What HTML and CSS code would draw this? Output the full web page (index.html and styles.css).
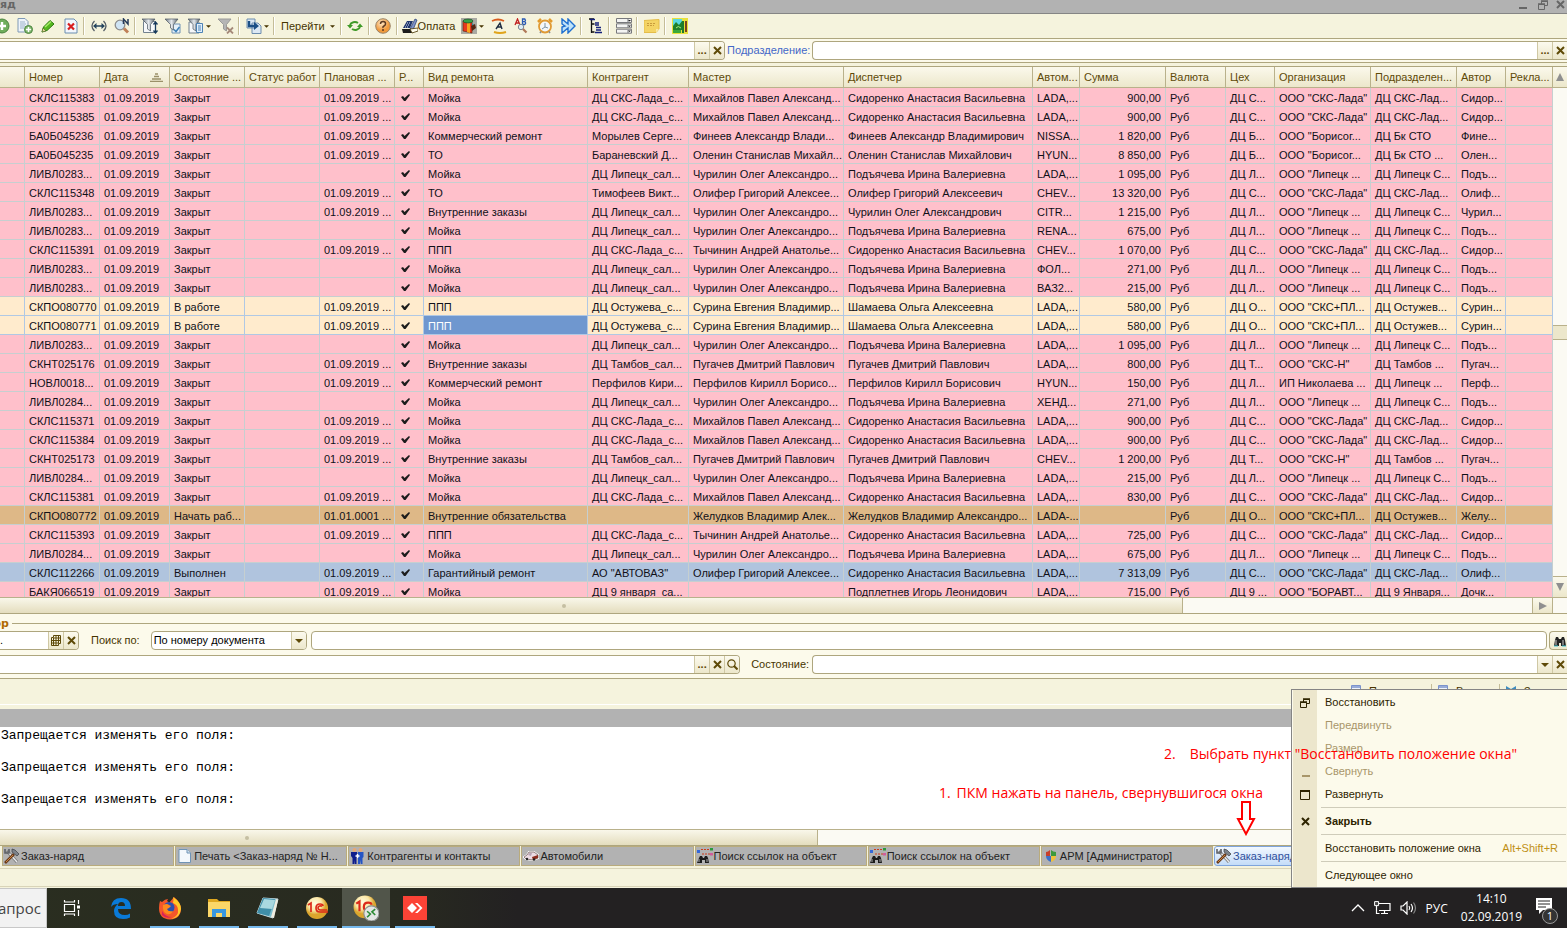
FILE: index.html
```
<!DOCTYPE html>
<html lang="ru">
  <head>
    <meta charset="UTF-8" />
    <meta name="viewport" content="width=device-width, initial-scale=1.0" />
    <title>Заказ-наряд</title>
    <link rel="stylesheet" href="styles.css">
  </head>
  <body>
    <svg class="sprite" aria-hidden="true">
      <defs>
        <linearGradient id="funnelFill" x1="0" x2="1"><stop offset="0" stop-color="#6b7680" /><stop offset=".5" stop-color="#e4e8ec" /><stop offset="1" stop-color="#59636c" /></linearGradient>
        <radialGradient id="gold" cx=".4" cy=".3"><stop offset="0" stop-color="#fffbe0" /><stop offset=".6" stop-color="#fbe8a8" /><stop offset="1" stop-color="#dba52c" /></radialGradient>
        <radialGradient id="orange" cx=".4" cy=".3"><stop offset="0" stop-color="#ffe9c6" /><stop offset="1" stop-color="#f09a3c" /></radialGradient>
      </defs>
      <symbol id="i-plus" viewBox="0 0 16 16"><circle cx="8" cy="8" r="7" fill="#6fae5c" stroke="#4c8440" /><path d="M8 4v8M4 8h8" stroke="#fff" stroke-width="2.4" /></symbol>
      <symbol id="i-docplus" viewBox="0 0 16 16"><path d="M1 .5h7l3 3V14H1z" fill="#eef4fa" stroke="#7f99b5" /><path d="M3 4h5M3 6h6M3 8h5M3 10h4" stroke="#9cb3cb" /><circle cx="11.500" cy="11.500" r="4" fill="#7fb76e" stroke="#4c8440" /><path d="M11.500 9v5M9 11.500h5" stroke="#fff" stroke-width="1.500" /></symbol>
      <symbol id="i-pencil" viewBox="0 0 16 16"><path d="M2 14l1.500-5L10 2.500l4 3.500L7 12.500z" fill="#56b820" stroke="#2c7a12" /><path d="M5 9l6-5.500" stroke="#a8ec6c" stroke-width="1.500" /><path d="M2 14l1-4 3 3z" fill="#e8d9a0" stroke="#4a6a20" stroke-width=".6" /></symbol>
      <symbol id="i-delete" viewBox="0 0 16 16"><path d="M2 1h9l3 3v11H2z" fill="#f2f7fc" stroke="#6b8db0" /><path d="M5 5.500l6 6M11 5.500l-6 6" stroke="#d81e1e" stroke-width="2.200" /></symbol>
      <symbol id="i-width" viewBox="0 0 16 16"><path d="M3.500 3Q-1.500 8 3.500 13M12.500 3q5 5 0 10" fill="none" stroke="#555e66" stroke-width="1.300" /><path d="M3 8h10" stroke="#24445e" stroke-width="1.500" /><path d="M2 8l3.500-3v6zM14 8l-3.500-3v6z" fill="#24445e" /></symbol>
      <symbol id="i-find" viewBox="0 0 16 16"><circle cx="6" cy="7" r="4.800" fill="#cfe4f4" stroke="#8c8c8c" stroke-width="1.300" /><path d="M10 10.500l4 4" stroke="#c08058" stroke-width="3" /><path d="M9.500 6V1l4.500 5V1" fill="none" stroke="#243a5a" stroke-width="1.500" /></symbol>
      <symbol id="i-filter-ord" viewBox="0 0 16 16"><path d="M1.500 3.500h12v11h-12z" fill="#f6f8fa" stroke="#72818e" /><path d="M0 1h13L8.500 6.500V13l-3-2V6.500z" fill="url(#funnelFill)" stroke="#4d5861" stroke-width=".7" /><path d="M13.500 4v11M11.500 12.500l2 2.500 2-2.500M11.500 6.500l2-2.500 2 2.500" fill="none" stroke="#173a5c" stroke-width="1.300" /></symbol>
      <symbol id="i-filter-sel" viewBox="0 0 16 16"><path d="M7 6h8v9H7z" fill="#e6f1fa" stroke="#6e91b3" /><path d="M0 1h13L8.500 6.500V12l-3-2V6.500z" fill="url(#funnelFill)" stroke="#4d5861" stroke-width=".7" /><path d="M9 11.500l2 2 3.500-4.500" fill="none" stroke="#3b7fb8" stroke-width="1.500" /></symbol>
      <symbol id="i-filter-list" viewBox="0 0 16 16"><path d="M1 4h10v11H1z" fill="#f6f8fa" stroke="#72818e" /><path d="M0 1h12L8 6.500V13l-3-2V6.500z" fill="url(#funnelFill)" stroke="#4d5861" stroke-width=".7" /><path d="M8.500 5.500h6v9h-6z" fill="#e2effb" stroke="#4c83b5" /><path d="M10 8h3M10 10h3M10 12h3" stroke="#4c83b5" /></symbol>
      <symbol id="i-filter-off" viewBox="0 0 16 16"><path d="M0 1h13L8.500 6.500V13l-3-2V6.500z" fill="#b5b5b5" stroke="#9a9a98" /><path d="M9 9.500l6 6M15 9.500l-6 6" stroke="#a58a7a" stroke-width="1.800" /></symbol>
      <symbol id="i-goto" viewBox="0 0 16 16"><path d="M1 1h8v9H1zM6 5h6l3 3v7.500H6z" fill="#dce8f4" stroke="#6c8cad" /><path d="M3 3v5h6" fill="none" stroke="#1c4f86" stroke-width="2.400" /><path d="M8 4L13 8 8 12z" fill="#1c4f86" /></symbol>
      <symbol id="i-refresh" viewBox="0 0 16 16"><path d="M3 7a5 4 0 0 1 8-2M13 9a5 4 0 0 1-8 2" fill="none" stroke="#3f9a28" stroke-width="2" /><path d="M0 7h6L3 10.500zM10 9h6l-3-3.500z" fill="#3f9a28" /></symbol>
      <symbol id="i-help" viewBox="0 0 16 16"><circle cx="8" cy="8" r="7.300" fill="url(#orange)" stroke="#9a8468" /><path d="M5.500 6q0-2.500 2.600-2.500T10.500 6q0 1.300-1.500 2T8 10" fill="none" stroke="#5c3a22" stroke-width="1.500" /><circle cx="8" cy="12" r="1" fill="#5c3a22" /></symbol>
      <symbol id="i-pay" viewBox="0 0 16 16"><path d="M1 10L5 3h6l-3 7z" fill="#20366e" /><path d="M5 5h4M4 7h4M3 9h4" stroke="#d8e0f4" stroke-dasharray="1 1" /><path d="M0 11h9l2 4H1z" fill="#1b1b1b" /><path d="M8 11l5-10 2 1-4 10z" fill="#7f93c8" stroke="#20366e" stroke-width=".7" /><path d="M8 11l8-1v3l-6 2z" fill="#fffef0" stroke="#463400" stroke-width=".8" /></symbol>
      <symbol id="i-barrel" viewBox="0 0 16 16"><path d="M0 0h16v16H0z" fill="#a9a9a2" /><path d="M2 3l9 1v11l-9-2z" fill="#e8381e" stroke="#5a1e08" stroke-width=".6" /><path d="M6 3.500h3V15l-3-1z" fill="#f7a21e" /><ellipse cx="7" cy="3" rx="5" ry="2" fill="#36a048" stroke="#1c3c1c" stroke-width=".6" /><path d="M11 5l2 2v3l-2 2z" fill="#2b94a8" /><path d="M10 8l4-2 1 4-4 3z" fill="#542814" /></symbol>
      <symbol id="i-aswap" viewBox="0 0 16 16"><path d="M1 3q6-3 12 0" fill="none" stroke="#d85a1c" stroke-width="1.800" /><path d="M3 14q6 2 12 0" fill="none" stroke="#e0a41c" stroke-width="2" /><path d="M5 11l4-6 2 6M6.500 9h4" fill="none" stroke="#1d2b40" stroke-width="1.400" /></symbol>
      <symbol id="i-abfind" viewBox="0 0 16 16"><path d="M1 7l2.500-6L6 7M2 5h3" fill="none" stroke="#c02020" stroke-width="1.300" /><path d="M8.500 1v5.500h2.300q1.700-1.400 0-2.800 1.300-1.400 0-2.700zM8.500 3.700h2.300" fill="none" stroke="#2a59b4" stroke-width="1.300" /><circle cx="7" cy="9" r="2.700" fill="#dcebf6" stroke="#7c8790" /><path d="M9 11l3.500 3.500" stroke="#b07858" stroke-width="2.200" /></symbol>
      <symbol id="i-alarm" viewBox="0 0 16 16"><path d="M1 4l3-3M15 4l-3-3" stroke="#e39a2c" stroke-width="2.500" /><circle cx="8" cy="8.500" r="6" fill="#f4f7fa" stroke="#e09a34" stroke-width="1.800" /><path d="M8 5v4l3 1M8 9l-3 2" fill="none" stroke="#7f93a5" /><path d="M3 15l1-1.500M13 15l-1-1.500" stroke="#8a8a8a" stroke-width="1.500" /></symbol>
      <symbol id="i-skip" viewBox="0 0 16 16"><path d="M2 1l6 5V1l7 7-7 7v-5l-6 5V9l3-1-3-2z" fill="#bfe3fa" stroke="#1f6fd0" stroke-width="1.400" /></symbol>
      <symbol id="i-tree" viewBox="0 0 16 16"><path d="M1 1h5M3.500 2v13M3.500 6h3M3.500 14h3" stroke="#111" stroke-width="1.300" fill="none" /><path d="M2 1.500h5M7 5h4M7 7h4M8 9.500h5M8 12h5M7 14.500h7" stroke="#14207c" stroke-width="1.700" /></symbol>
      <symbol id="i-server" viewBox="0 0 16 16"><path d="M.5 .5h15v4H.500zM.5 5.800h15v4H.500zM.5 11.200h15v4H.500z" fill="#f4f4f2" stroke="#77787c" /><path d="M12 1v3M12 6.500v3M12 12v3" stroke="#77787c" /><path d="M12 2h3l-1.500 1.500zM12 7.500h3L13.500 9zM12 12.500h3L13.500 14z" fill="#222" /></symbol>
      <symbol id="i-note" viewBox="0 0 16 16"><path d="M0 2.500l15-1V11l-3 3.500H0z" fill="#f4d464" stroke="#e4bc48" /><path d="M3 5.500h9M3 7.500h7" stroke="#c99b3c" stroke-dasharray="2 1" /><path d="M12 14.500V11h3z" fill="#fbe9a4" /></symbol>
      <symbol id="i-picture" viewBox="0 0 16 16"><path d="M0 0h16v16H0z" fill="#e8e03a" /><path d="M1 1h9v10H1z" fill="#58d8e0" /><path d="M1 8l3-4 3 3 3-4v9H1z" fill="#20802a" /><path d="M4 10q2-3 5 0" fill="none" stroke="#a4f07c" /><path d="M10 3h2v12h-2z" fill="#1c7a2c" /><path d="M13 3h2v11h-2z" fill="#7a4320" /><path d="M1 12h8v3H1z" fill="#3aa83a" /></symbol>
      <symbol id="i-tools" viewBox="0 0 16 16"><path d="M3 3l10 11" stroke="#777" stroke-width="3" /><path d="M4 4l9 10" stroke="#e9eaec" stroke-width="1.400" /><path d="M1 15l9-9" stroke="#6a3a18" stroke-width="2.600" /><path d="M2 14l7-7" stroke="#c98645" stroke-width="1" /><path d="M8 1l3 1 4 4-2 2-5-4z" fill="#7d838b" stroke="#3b3d42" stroke-width=".7" /><path d="M1 1v4h4V1" fill="none" stroke="#5c6066" stroke-width="1.600" /></symbol>
      <symbol id="i-doc" viewBox="0 0 16 16"><path d="M2 1.500h8l3.500 3.500v9.500H2z" fill="#f3f8fc" stroke="#6f93b5" /><path d="M10 1.500V5h3.500" fill="#cfe0ef" stroke="#6f93b5" /></symbol>
      <symbol id="i-people" viewBox="0 0 16 16"><circle cx="4.500" cy="2" r="2" fill="#e4a878" /><circle cx="10.500" cy="2" r="2" fill="#e4a878" /><path d="M1 4h6l1 5-1.500 1v6H5v-4l-.5 4h-2v-6L1 8z" fill="#0e1d8c" /><path d="M8 4h5.500v5l-1 1v6h-1.800l-.4-4-.3 4H8z" fill="#2454c4" /><path d="M5.500 8h4M7.500 6v4" stroke="#fff" stroke-width="1.500" /></symbol>
      <symbol id="i-car" viewBox="0 0 16 16"><path d="M1 9l3-2 2-3h5l4 3v3l-5 2-7-1z" fill="#f6f1ee" stroke="#fff" stroke-width="2" /><path d="M1 9l3-2 2-3h5l4 3v3l-5 2-7-1z" fill="#ecdce4" stroke="#66504c" stroke-width=".7" /><path d="M5 7l1.500-2H9l-1 3z" fill="#b8a4b4" /><path d="M9 9l6-2v3l-5 2z" fill="#8c2c1e" /><circle cx="4" cy="11" r="1.200" fill="#222" /><circle cx="11" cy="11.500" r="1.200" fill="#222" /></symbol>
      <symbol id="i-links" viewBox="0 0 16 16"><path d="M0 2h3v3H0z" fill="#3468d8" /><path d="M13 0h3v2.500h-3z" fill="#2c9a3c" /><path d="M13 5h3v2.500h-3z" fill="#d05c9c" /><path d="M4 1.500h9M5 6h8" stroke="#cc3c1c" stroke-dasharray="2 1" /><path d="M2 10l1-2h2l1 2h1l1-2h2l1 2 1 5H8v-3H5v3H0z" fill="#1c1c1c" /><path d="M2 11v3M10 11v3" stroke="#a9a9a9" /></symbol>
      <symbol id="i-shield" viewBox="0 0 16 16"><path d="M7 2v6H3V4q2 0 4-2z" fill="#c8402a" /><path d="M8 2v6h5V4Q10 4 8 2z" fill="#3d9a3c" /><path d="M3 8h5v6Q3 12 3 8z" fill="#3c70c8" /><path d="M13 8H8v6q5-2 5-6z" fill="#f0c03c" /></symbol>
      <symbol id="i-binoc" viewBox="0 0 12 12"><path d="M1 5l1-3h2l1 2h2l1-2h2l1 3 1 6H7V8H5v3H0z" fill="#222" /><path d="M2 5v5M9 5v5" stroke="#ccc" /><path d="M0 11h4M8 11h4" stroke="#40c8d8" /></symbol>
      <symbol id="i-cross" viewBox="0 0 9 9"><path d="M1 1l7 7M8 1L1 8" stroke="currentColor" stroke-width="2" /></symbol>
      <symbol id="i-down" viewBox="0 0 8 4"><path d="M0 0h8L4 4z" fill="currentColor" /></symbol>
      <symbol id="i-magnify" viewBox="0 0 11 11"><circle cx="4.500" cy="4.500" r="3.700" fill="none" stroke="#5e4a08" stroke-width="1.200" /><path d="M7 7l3.500 3.500" stroke="#5e4a08" stroke-width="2" /></symbol>
      <symbol id="i-grid" viewBox="0 0 10 11"><path d="M2.500 .5h7v8h-2v2H.500v-8h2zM2.500 3h7M2.500 5.500h7M.5 5.500h7M.5 8h7M5 .5v10M7.500 .5v8M2.500 3v7.500" fill="none" stroke="#5e4a08" /></symbol>
      <symbol id="i-check" viewBox="0 0 9 8"><path d="M0 3l2-1 1.500 2L8 0l1 1-4.500 6H3z" fill="#1c1c1c" /></symbol>
      <symbol id="i-list" viewBox="0 0 10 12"><path d="M.5 .5h9v11h-9z" fill="#eef4fc" stroke="#7b93cc" /><path d="M0 2h10M2 5h6M2 8h6" stroke="#7b93cc" stroke-width="1.500" /></symbol>
      <symbol id="i-restore" viewBox="0 0 10 10"><path d="M3.500 4V1.500h6v4H7" fill="none" stroke="currentColor" /><path d="M.5 4.500h6v5h-6z" fill="none" stroke="currentColor" /><path d="M3 1h7M0 4h7" stroke="currentColor" stroke-width="1.500" /></symbol>
      <symbol id="i-taskview" viewBox="0 0 18 18"><path d="M1.500 1v2h10V1M1.500 17v-2h10v2M1.500 5.500h10v7h-10zM15.500 1v4M15.500 11v6" fill="none" stroke="#fff" stroke-width="1.200" /><path d="M14 6.500h3v3h-3z" fill="#fff" /></symbol>
      <symbol id="i-edge" viewBox="0 0 22 22"><path d="M1 10Q2 1 11 1q10 0 10 11H8q0 6 7 6 3 0 5-1.500v4Q17 22 13 22 4 22 4 14q0-4 4-7-5 0-7 3zM8 9h7q0-4-3.500-4T8 9z" fill="#0a7ad8" fill-rule="evenodd" /></symbol>
      <symbol id="i-firefox" viewBox="0 0 24 24"><path d="M2 5l2 1q3-3 6-3l-1 2q2 1 2 2l5-6q6 5 7 11 0 11-11 11.500Q1 23 1 12q0-4 1-7z" fill="#f4572a" /><path d="M15 1q8 5 8 12-1 9-10 10 8-3 7-9 0-5-5-7 1-3 0-6z" fill="#ffc928" /><circle cx="11" cy="11.500" r="5.500" fill="#2c4fb0" /><path d="M5 9q4-2 6 0l2 1-2 2-2 1q1 3 6 2-2 4-6 3-5-2-4-9z" fill="#ff8a1c" /><path d="M4 15q3 6 10 6-6 2-10-2z" fill="#d8205c" /></symbol>
      <symbol id="i-explorer" viewBox="0 0 24 20"><path d="M1 1h9l2 2h11v16H1z" fill="#e0a820" /><path d="M1 4h22v15H1z" fill="#fcd768" /><path d="M5 11h14v8h-4v-4H9v4H5z" fill="#3a98e0" /></symbol>
      <symbol id="i-notepad" viewBox="0 0 24 24"><path d="M7 2l15 1-5 19-16-5z" fill="#79bccd" stroke="#c8dde2" /><path d="M7 2l12 1-6 17-12-3z" fill="#3f8ea8" /><path d="M8 3l11 1-3 9-12-1z" fill="#a9d8e0" /><path d="M20 3l2 1-4 18-3-1z" fill="#efece0" /></symbol>
      <symbol id="i-1c" viewBox="0 0 24 24"><circle cx="12" cy="12" r="11" fill="url(#gold)" /><path d="M3 9l3-2v9M18 10q0-2-3-2-4 0-4 4t4 4h8M17 10.500q-1-1-2.500-.5-1.500.500-1.500 2t2 2H22" fill="none" stroke="#dc2a1a" stroke-width="1.700" /></symbol>
      <symbol id="i-1c-remote" viewBox="0 0 24 24"><circle cx="11" cy="11" r="10.500" fill="url(#gold)" /><path d="M3 8l3-2v9M17 9q0-2-3-2-4 0-4 4t4 4" fill="none" stroke="#dc2a1a" stroke-width="2" /><circle cx="17" cy="17" r="7" fill="#e2e5e4" stroke="#8b8f8e" /><path d="M13 15l3 2.500-3 3M20.500 13l-3 2.500 3 3" fill="none" stroke="#2a8a34" stroke-width="1.500" /></symbol>
      <symbol id="i-anydesk" viewBox="0 0 24 24"><path d="M0 0h24v24H0z" fill="#fc4336" /><path d="M4 12l5-5 5 5-5 5zM12 7h2.500l5 5-5 5H12l5-5z" fill="#fff" /></symbol>
      <symbol id="i-chevron" viewBox="0 0 14 8"><path d="M1 7l6-6 6 6" fill="none" stroke="#fff" stroke-width="1.300" /></symbol>
      <symbol id="i-network" viewBox="0 0 17 14"><path d="M5 2.500h11v7H5M10.500 9.500v3M7 12.500h7M2.500 5v7.500h3" fill="none" stroke="#fff" stroke-width="1.200" /><path d="M.6 .6h4v4h-4z" fill="#444" stroke="#fff" /></symbol>
      <symbol id="i-sound" viewBox="0 0 17 14"><path d="M1 5h2l4-4v12L3 9H1z" fill="none" stroke="#fff" stroke-width="1.200" /><path d="M9 5q1.500 2 0 4M11 3q3 4 0 8" fill="none" stroke="#fff" stroke-width="1.200" /><path d="M13.500 1.500q4 5.500 0 11" fill="none" stroke="#888" stroke-width="1.200" /></symbol>
      <symbol id="i-notify" viewBox="0 0 18 18"><path d="M1 1h16v12H8l-4 4v-4H1z" fill="#fff" /><path d="M3 4h12M3 7h12M3 10h8" stroke="#222" /></symbol>
    </svg>

    <div class="window">
      <div class="title-bar">
        <span class="title">ряд</span>
        <button class="title-button" aria-label="Свернуть"><span class="minimize-line"></span></button>
        <button class="title-button" aria-label="Восстановить"><svg width="10" height="10"><use href="#i-restore" /></svg></button>
        <button class="title-button" aria-label="Закрыть"><svg width="9" height="9"><use href="#i-cross" /></svg></button>
      </div>

      <div class="toolbar">
        <button class="tool tool-cut" aria-label="Добавить"><svg class="icon"><use href="#i-plus" /></svg></button>
        <button class="tool" aria-label="Скопировать"><svg class="icon"><use href="#i-docplus" /></svg></button>
        <button class="tool" aria-label="Изменить"><svg class="icon"><use href="#i-pencil" /></svg></button>
        <button class="tool" aria-label="Пометить на удаление"><svg class="icon"><use href="#i-delete" /></svg></button>
        <span class="separator"></span>
        <button class="tool" aria-label="Интервал"><svg class="icon"><use href="#i-width" /></svg></button>
        <button class="tool" aria-label="Найти по номеру"><svg class="icon"><use href="#i-find" /></svg></button>
        <span class="separator"></span>
        <button class="tool" aria-label="Отбор и сортировка"><svg class="icon"><use href="#i-filter-ord" /></svg></button>
        <button class="tool" aria-label="Отбор по значению"><svg class="icon"><use href="#i-filter-sel" /></svg></button>
        <button class="tool tool-drop" aria-label="История отборов"><svg class="icon"><use href="#i-filter-list" /></svg><svg class="drop"><use href="#i-down" /></svg></button>
        <button class="tool" aria-label="Отключить отбор"><svg class="icon"><use href="#i-filter-off" /></svg></button>
        <span class="separator"></span>
        <button class="tool tool-drop" aria-label="Ввести на основании"><svg class="icon"><use href="#i-goto" /></svg><svg class="drop"><use href="#i-down" /></svg></button>
        <span class="separator"></span>
        <button class="tool tool-text tool-menu">Перейти<svg class="drop"><use href="#i-down" /></svg></button>
        <span class="separator"></span>
        <button class="tool" aria-label="Обновить"><svg class="icon"><use href="#i-refresh" /></svg></button>
        <span class="separator"></span>
        <button class="tool" aria-label="Справка"><svg class="icon"><use href="#i-help" /></svg></button>
        <span class="separator"></span>
        <button class="tool tool-text tool-pay"><svg class="icon"><use href="#i-pay" /></svg>Оплата</button>
        <button class="tool tool-drop" aria-label="Материалы"><svg class="icon"><use href="#i-barrel" /></svg><svg class="drop"><use href="#i-down" /></svg></button>
        <button class="tool" aria-label="Замена"><svg class="icon"><use href="#i-aswap" /></svg></button>
        <button class="tool" aria-label="Поиск текста"><svg class="icon"><use href="#i-abfind" /></svg></button>
        <button class="tool" aria-label="Напоминание"><svg class="icon"><use href="#i-alarm" /></svg></button>
        <button class="tool" aria-label="Далее"><svg class="icon"><use href="#i-skip" /></svg></button>
        <span class="separator"></span>
        <button class="tool" aria-label="Структура"><svg class="icon"><use href="#i-tree" /></svg></button>
        <span class="separator"></span>
        <button class="tool" aria-label="Список"><svg class="icon"><use href="#i-server" /></svg></button>
        <span class="separator"></span>
        <button class="tool" aria-label="Заметка"><svg class="icon"><use href="#i-note" /></svg></button>
        <span class="separator"></span>
        <button class="tool" aria-label="Изображение"><svg class="icon"><use href="#i-picture" /></svg></button>
      </div>

      <div class="filter-row filter-top">
        <div class="field field-left">
          <input type="text" aria-label="Организация" />
          <button class="field-button" aria-label="Выбрать">...</button>
          <button class="field-button" aria-label="Очистить"><svg width="9" height="9"><use href="#i-cross" /></svg></button>
        </div>
        <label class="link-label" for="department">Подразделение:</label>
        <div class="field field-right">
          <input type="text" id="department" />
          <button class="field-button" aria-label="Выбрать">...</button>
          <button class="field-button" aria-label="Очистить"><svg width="9" height="9"><use href="#i-cross" /></svg></button>
        </div>
      </div>

      <div class="grid">
        <div class="grid-body">
          <table class="orders">
            <colgroup>
              <col class="c-icon" /><col class="c-number" /><col class="c-date" /><col class="c-number" /><col class="c-number" /><col class="c-number" /><col class="c-check" /><col class="c-kind" /><col class="c-client" /><col class="c-master" /><col class="c-manager" /><col class="c-short" /><col class="c-sum" /><col class="c-currency" /><col class="c-shop" /><col class="c-org" /><col class="c-sum" /><col class="c-shop" /><col class="c-short" />
            </colgroup>
            <thead>
              <tr>
                <th></th><th>Номер</th><th><span class="sorted">Дата<svg width="13" height="9"><path d="M5 1h3M4 3.500h5M2 6h9M0 8.500h13" stroke="#9a9068" stroke-width="1.500" /></svg></span></th><th>Состояние ...</th><th>Статус работ</th><th>Плановая ...</th><th>Р...</th><th>Вид ремонта</th><th>Контрагент</th><th>Мастер</th><th>Диспетчер</th><th>Автом...</th><th>Сумма</th><th>Валюта</th><th>Цех</th><th>Организация</th><th>Подразделен...</th><th>Автор</th><th>Рекла...</th>
              </tr>
            </thead>
            <tbody id="orders"></tbody>
          </table>
        </div>
        <div class="scroll-v">
          <button class="scroll-button scroll-up" aria-label="Вверх"><svg width="8" height="8"><path d="M4 0l4 8H0z" fill="#8f8f8f" /></svg></button>
          <div class="scroll-track"><div class="thumb-v"></div></div>
          <button class="scroll-button scroll-down" aria-label="Вниз"><svg width="8" height="8"><path d="M4 8l4-8H0z" fill="#8f8f8f" /></svg></button>
        </div>
      </div>
      <div class="scroll-h">
        <div class="scroll-rail"><div class="thumb-h thumb-grid"><span class="grip"></span></div></div>
        <button class="scroll-button scroll-right" aria-label="Вправо"><svg width="8" height="8"><path d="M0 0l8 4-8 4z" fill="#8f8f8f" /></svg></button>
        <span class="scroll-corner"></span>
      </div>

      <div class="selection">
        <div class="group-title"><span>ор</span></div>
        <div class="filter-row">
          <div class="field field-small">
            <input type="text" value="." aria-label="Отбор" />
            <button class="field-button" aria-label="Список"><svg width="10" height="11"><use href="#i-grid" /></svg></button>
            <button class="field-button" aria-label="Очистить"><svg width="9" height="9"><use href="#i-cross" /></svg></button>
          </div>
          <label class="search-label" for="searchBy">Поиск по:</label>
          <div class="field field-select">
            <select id="searchBy"><option>По номеру документа</option></select>
            <span class="field-button"><svg width="8" height="4"><use href="#i-down" /></svg></span>
          </div>
          <div class="field field-search"><input type="text" aria-label="Строка поиска" /></div>
          <button class="find-button" aria-label="Найти"><svg width="12" height="12"><use href="#i-binoc" /></svg></button>
        </div>
        <div class="filter-row">
          <div class="field field-left field-client">
            <input type="text" aria-label="Контрагент" />
            <button class="field-button" aria-label="Выбрать">...</button>
            <button class="field-button" aria-label="Очистить"><svg width="9" height="9"><use href="#i-cross" /></svg></button>
            <button class="field-button" aria-label="Открыть"><svg width="11" height="11"><use href="#i-magnify" /></svg></button>
          </div>
          <label class="state-label" for="state">Состояние:</label>
          <div class="field field-right">
            <input type="text" id="state" />
            <button class="field-button" aria-label="Показать список"><svg width="8" height="4"><use href="#i-down" /></svg></button>
            <button class="field-button" aria-label="Очистить"><svg width="9" height="9"><use href="#i-cross" /></svg></button>
          </div>
        </div>
      </div>

      <div class="bottom-bar">
        <button class="bottom-button"><svg width="10" height="12"><use href="#i-list" /></svg>Печать</button>
        <button class="bottom-button"><svg width="10" height="12"><use href="#i-list" /></svg>Ввод</button>
        <button class="bottom-button"><svg width="10" height="12"><path d="M0 1l5 3 5-3v5L5 9 0 6z" fill="#3c8cc0" /></svg>Закрыть</button>
      </div>
      <div class="messages-title"></div>
      <div class="messages">
        <p>Запрещается изменять его поля:</p>
        <p>Запрещается изменять его поля:</p>
        <p>Запрещается изменять его поля:</p>
      </div>
      <div class="scroll-h">
        <div class="scroll-rail"><div class="thumb-h thumb-messages"><span class="grip"></span></div></div>
      </div>

      <div class="window-tabs">
        <button class="tab"><svg class="icon"><use href="#i-tools" /></svg>Заказ-наряд</button>
        <button class="tab"><svg class="icon"><use href="#i-doc" /></svg>Печать &lt;Заказ-наряд № Н...</button>
        <button class="tab"><svg class="icon"><use href="#i-people" /></svg>Контрагенты и контакты</button>
        <button class="tab"><svg class="icon"><use href="#i-car" /></svg>Автомобили</button>
        <button class="tab"><svg class="icon"><use href="#i-links" /></svg>Поиск ссылок на объект</button>
        <button class="tab"><svg class="icon"><use href="#i-links" /></svg>Поиск ссылок на объект</button>
        <button class="tab"><svg class="icon"><use href="#i-shield" /></svg>АРМ [Администратор]</button>
        <button class="tab tab-current"><svg class="icon"><use href="#i-tools" /></svg>Заказ-наряд</button>
      </div>
      <div class="status-bar"></div>
    </div>

    <div class="taskbar">
      <button class="task-search">апрос</button>
      <button class="task" aria-label="Представление задач"><svg width="18" height="18"><use href="#i-taskview" /></svg></button>
      <button class="task" aria-label="Edge"><svg width="22" height="22"><use href="#i-edge" /></svg></button>
      <button class="task running" aria-label="Firefox"><svg width="24" height="24"><use href="#i-firefox" /></svg></button>
      <button class="task running" aria-label="Проводник"><svg width="24" height="20"><use href="#i-explorer" /></svg></button>
      <button class="task running" aria-label="Блокнот"><svg width="24" height="24"><use href="#i-notepad" /></svg></button>
      <button class="task running" aria-label="1С"><svg width="24" height="24"><use href="#i-1c" /></svg></button>
      <button class="task running active" aria-label="1С удалённо"><svg width="26" height="26"><use href="#i-1c-remote" /></svg></button>
      <button class="task running" aria-label="AnyDesk"><svg width="24" height="24"><use href="#i-anydesk" /></svg></button>
      <div class="tray">
        <svg width="14" height="8"><use href="#i-chevron" /></svg>
        <svg width="17" height="14"><use href="#i-network" /></svg>
        <svg width="17" height="14"><use href="#i-sound" /></svg>
        <span>РУС</span>
        <div class="clock"><span>14:10</span><span>02.09.2019</span></div>
        <button class="notify" aria-label="Уведомления"><svg width="18" height="18"><use href="#i-notify" /></svg><span class="badge">1</span></button>
      </div>
    </div>

    <div class="menu" role="menu">
      <button class="menu-item"><span class="menu-icon"><svg width="10" height="10"><use href="#i-restore" /></svg></span>Восстановить</button>
      <button class="menu-item" disabled><span class="menu-icon"></span>Передвинуть</button>
      <button class="menu-item" disabled><span class="menu-icon"></span>Размер</button>
      <button class="menu-item" disabled><span class="menu-icon"><svg width="9" height="10"><path d="M1 9h8" stroke="currentColor" stroke-width="2" /></svg></span>Свернуть</button>
      <button class="menu-item"><span class="menu-icon"><svg width="10" height="10"><path d="M.5 1h9v8.500h-9z" fill="none" stroke="currentColor" /><path d="M0 1h10" stroke="currentColor" stroke-width="2" /></svg></span>Развернуть</button>
      <div class="menu-line"></div>
      <button class="menu-item menu-default"><span class="menu-icon"><svg width="9" height="9"><use href="#i-cross" /></svg></span>Закрыть</button>
      <div class="menu-line"></div>
      <button class="menu-item"><span class="menu-icon"></span>Восстановить положение окна<kbd>Alt+Shift+R</kbd></button>
      <div class="menu-line"></div>
      <button class="menu-item"><span class="menu-icon"></span>Следующее окно</button>
    </div>

    <div class="hint hint-second"><span>2.</span><span>Выбрать пункт "Восстановить положение окна"</span></div>
    <div class="hint hint-first"><span>1.</span><span>ПКМ нажать на панель, свернувшигося окна</span></div>
    <svg class="hint-arrow" width="20" height="35"><path d="M6 1h8v17h4l-8 15-8-15h4z" fill="#fff" stroke="#f00" stroke-width="2" /></svg>

    <script>
      const PLAN = "01.09.2019 ...";
      const SIDORENKO = "Сидоренко Анастасия Васильевна";
      const PODYACHEVA = "Подъячева Ирина Валериевна";
      const MIHAYLOV = "Михайлов Павел Александ...";
      const CHURILIN = "Чурилин Олег Александро...";
      const LADA = ["ДЦ С...", 'ООО "СКС-Лада"', "ДЦ СКС-Лад..."];
      const LIPETSK = ["ДЦ Л...", 'ООО "Липецк ...', "ДЦ Липецк С..."];
      const OSTUZHEVA = ["ДЦ О...", 'ООО "СКС+ПЛ...', "ДЦ Остужев..."];
      const BORISOG = ["ДЦ Б...", 'ООО "Борисог...'];
      const TAMBOV = ["ДЦ Т...", 'ООО "СКС-Н"', "ДЦ Тамбов ..."];

      // number, state, plan date, kind, client, master, manager, car, sum, shop, company, department, author
      const orders = [
        ["СКЛС115383", "Закрыт", PLAN, "Мойка", "ДЦ СКС-Лада_с...", MIHAYLOV, SIDORENKO, "LADA,...", "900,00", ...LADA, "Сидор..."],
        ["СКЛС115385", "Закрыт", PLAN, "Мойка", "ДЦ СКС-Лада_с...", MIHAYLOV, SIDORENKO, "LADA,...", "900,00", ...LADA, "Сидор..."],
        ["БА0Б045236", "Закрыт", PLAN, "Коммерческий ремонт", "Морылев Серге...", "Финеев Александр Влади...", "Финеев Александр Владимирович", "NISSA...", "1 820,00", ...BORISOG, "ДЦ Бк СТО", "Фине..."],
        ["БА0Б045235", "Закрыт", PLAN, "ТО", "Бараневский Д...", "Оленин Станислав Михайл...", "Оленин Станислав Михайлович", "HYUN...", "8 850,00", ...BORISOG, "ДЦ Бк СТО ...", "Олен..."],
        ["ЛИВЛ0283...", "Закрыт", "", "Мойка", "ДЦ Липецк_сал...", CHURILIN, PODYACHEVA, "LADA,...", "1 095,00", ...LIPETSK, "Подъ..."],
        ["СКЛС115348", "Закрыт", PLAN, "ТО", "Тимофеев Викт...", "Олифер Григорий Алексее...", "Олифер Григорий Алексеевич", "CHEV...", "13 320,00", ...LADA, "Олиф..."],
        ["ЛИВЛ0283...", "Закрыт", PLAN, "Внутренние заказы", "ДЦ Липецк_сал...", CHURILIN, "Чурилин Олег Александрович", "CITR...", "1 215,00", ...LIPETSK, "Чурил..."],
        ["ЛИВЛ0283...", "Закрыт", "", "Мойка", "ДЦ Липецк_сал...", CHURILIN, PODYACHEVA, "RENA...", "675,00", ...LIPETSK, "Подъ..."],
        ["СКЛС115391", "Закрыт", PLAN, "ППП", "ДЦ СКС-Лада_с...", "Тычинин Андрей Анатолье...", SIDORENKO, "CHEV...", "1 070,00", ...LADA, "Сидор..."],
        ["ЛИВЛ0283...", "Закрыт", "", "Мойка", "ДЦ Липецк_сал...", CHURILIN, PODYACHEVA, "ФОЛ...", "271,00", ...LIPETSK, "Подъ..."],
        ["ЛИВЛ0283...", "Закрыт", "", "Мойка", "ДЦ Липецк_сал...", CHURILIN, PODYACHEVA, "ВАЗ2...", "215,00", ...LIPETSK, "Подъ..."],
        ["СКПО080770", "В работе", PLAN, "ППП", "ДЦ Остужева_с...", "Сурина Евгения Владимир...", "Шамаева Ольга Алексеевна", "LADA,...", "580,00", ...OSTUZHEVA, "Сурин..."],
        ["СКПО080771", "В работе", PLAN, "ППП", "ДЦ Остужева_с...", "Сурина Евгения Владимир...", "Шамаева Ольга Алексеевна", "LADA,...", "580,00", ...OSTUZHEVA, "Сурин..."],
        ["ЛИВЛ0283...", "Закрыт", "", "Мойка", "ДЦ Липецк_сал...", CHURILIN, PODYACHEVA, "LADA,...", "1 095,00", ...LIPETSK, "Подъ..."],
        ["СКНТ025176", "Закрыт", PLAN, "Внутренние заказы", "ДЦ Тамбов_сал...", "Пугачев Дмитрий Павлович", "Пугачев Дмитрий Павлович", "LADA,...", "800,00", ...TAMBOV, "Пугач..."],
        ["НОВЛ0018...", "Закрыт", PLAN, "Коммерческий ремонт", "Перфилов Кири...", "Перфилов Кирилл Борисо...", "Перфилов Кирилл Борисович", "HYUN...", "150,00", "ДЦ Л...", "ИП Николаева ...", "ДЦ Липецк ...", "Перф..."],
        ["ЛИВЛ0284...", "Закрыт", "", "Мойка", "ДЦ Липецк_сал...", CHURILIN, PODYACHEVA, "ХЕНД...", "271,00", ...LIPETSK, "Подъ..."],
        ["СКЛС115371", "Закрыт", PLAN, "Мойка", "ДЦ СКС-Лада_с...", MIHAYLOV, SIDORENKO, "LADA,...", "900,00", ...LADA, "Сидор..."],
        ["СКЛС115384", "Закрыт", PLAN, "Мойка", "ДЦ СКС-Лада_с...", MIHAYLOV, SIDORENKO, "LADA,...", "900,00", ...LADA, "Сидор..."],
        ["СКНТ025173", "Закрыт", PLAN, "Внутренние заказы", "ДЦ Тамбов_сал...", "Пугачев Дмитрий Павлович", "Пугачев Дмитрий Павлович", "CHEV...", "1 200,00", ...TAMBOV, "Пугач..."],
        ["ЛИВЛ0284...", "Закрыт", "", "Мойка", "ДЦ Липецк_сал...", CHURILIN, PODYACHEVA, "LADA,...", "215,00", ...LIPETSK, "Подъ..."],
        ["СКЛС115381", "Закрыт", PLAN, "Мойка", "ДЦ СКС-Лада_с...", MIHAYLOV, SIDORENKO, "LADA,...", "830,00", ...LADA, "Сидор..."],
        ["СКПО080772", "Начать раб...", "01.01.0001 ...", "Внутренние обязательства", "", "Желудков Владимир Алек...", "Желудков Владимир Александро...", "LADA-...", "", ...OSTUZHEVA, "Желу..."],
        ["СКЛС115393", "Закрыт", PLAN, "ППП", "ДЦ СКС-Лада_с...", "Тычинин Андрей Анатолье...", SIDORENKO, "LADA,...", "725,00", ...LADA, "Сидор..."],
        ["ЛИВЛ0284...", "Закрыт", "", "Мойка", "ДЦ Липецк_сал...", CHURILIN, PODYACHEVA, "LADA,...", "675,00", ...LIPETSK, "Подъ..."],
        ["СКЛС112266", "Выполнен", PLAN, "Гарантийный ремонт", 'АО "АВТОВАЗ"', "Олифер Григорий Алексее...", SIDORENKO, "LADA,...", "7 313,09", ...LADA, "Олиф..."],
        ["БАКЯ066519", "Закрыт", PLAN, "Мойка", "ДЦ 9 января_са...", "", "Подплетнев Игорь Леонидович", "LADA,...", "715,00", "ДЦ 9 ...", 'ООО "БОРАВТ...', "ДЦ 9 Января...", "Дочк..."],
      ];

      const rowClasses = {
        "Закрыт": "closed",
        "В работе": "in-work",
        "Начать раб...": "starting",
        "Выполнен": "done",
      };
      const selectedOrder = "СКПО080771";
      const check = '<svg width="9" height="8"><use href="#i-check" /></svg>';

      function renderOrders() {
        const body = document.getElementById("orders");
        orders.forEach((order) => {
          const [number, state, plan, kind, client, master, manager, car, sum, shop, company, department, author] = order;
          const cells = ["", number, "01.09.2019", state, "", plan, check, kind, client, master, manager, car, sum, "Руб", shop, company, department, author, ""];
          const row = document.createElement("tr");
          row.className = rowClasses[state];
          cells.forEach((value, index) => {
            const cell = document.createElement("td");
            cell.innerHTML = value;
            if (index === 6) cell.classList.add("check");
            if (index === 12) cell.classList.add("sum");
            if (index === 7 && number === selectedOrder) cell.classList.add("selected");
            row.appendChild(cell);
          });
          body.appendChild(row);
        });
      }

      renderOrders();
    </script>
  </body>
</html>
```
FILE: styles.css
```
* {
  box-sizing: border-box;
}
body {
  display: flex;
  flex-direction: column;
  height: 100vh;
  margin: 0;
  overflow: hidden;
  position: relative;
  font-family: "Liberation Sans", Arial, sans-serif;
  font-size: 11px;
  line-height: 13px;
  color: #463400;
  background-color: #f5f3dd;
}
button,
input,
select {
  margin: 0;
  padding: 0;
  border: none;
  border-radius: 0;
  background: none;
  font: inherit;
  color: inherit;
  white-space: nowrap;
}
svg {
  flex: none;
  display: block;
}
.sprite {
  position: absolute;
  width: 0;
  height: 0;
}
.icon {
  width: 16px;
  height: 16px;
}
.drop {
  width: 5px;
  height: 3px;
}
.window {
  flex: 1;
  min-height: 0;
  display: flex;
  flex-direction: column;
}

/* title and toolbar */
.title-bar {
  display: flex;
  flex: none;
  height: 14px;
  overflow: hidden;
  background-color: #b2b2b2;
  border-bottom: 1px solid #858585;
  color: #666;
}
.title {
  width: 16px;
  margin-right: auto;
  display: flex;
  justify-content: flex-end;
  line-height: 10px;
  font-family: "DejaVu Sans", sans-serif;
  font-weight: bold;
}
.title-button {
  display: flex;
  justify-content: center;
  width: 20px;
  height: 9px;
  color: #666;
}
.title-button:last-child {
  width: 14px;
}
.minimize-line {
  width: 8px;
  height: 2px;
  margin-top: 7px;
  background-color: #666;
}
.toolbar {
  display: flex;
  flex: none;
  align-items: center;
  height: 25px;
  overflow: hidden;
  border-bottom: 1px solid #aea67e;
}
.tool {
  display: flex;
  flex: none;
  align-items: center;
  justify-content: center;
  width: 23px;
  height: 22px;
}
.tool-cut {
  width: 13px;
  padding-right: 3px;
  justify-content: flex-end;
}
.tool-drop {
  width: 30px;
  gap: 2px;
}
.tool-text {
  width: auto;
  padding: 0 4px;
}
.tool-menu {
  gap: 5px;
}
.tool-pay {
  padding: 0 2px;
}
.separator {
  flex: none;
  width: 2px;
  height: 18px;
  margin: 0 2px 0 1px;
  border-left: 1px solid #c5bd98;
  border-right: 1px solid #fff;
}

/* fields */
.filter-row {
  display: flex;
  flex: none;
  align-items: center;
}
.filter-top {
  height: 24px;
  border-bottom: 1px solid #aea67e;
  background-color: #fcfaeb;
}
.field {
  display: flex;
  height: 19px;
  min-width: 0;
  overflow: hidden;
  border: 1px solid #aea67e;
  border-radius: 4px;
  background-color: #fff;
}
.field input,
.field select {
  flex: 1;
  min-width: 0;
  outline: none;
  color: #000;
}
.field select {
  appearance: none;
  padding-left: 2px;
}
.field-left {
  flex: 49;
  border-left: none;
  border-radius: 0 4px 4px 0;
}
.field-client {
  flex: 50;
}
.field-right {
  flex: 51;
  border-right: none;
  border-radius: 4px 0 0 4px;
}
.field-button {
  display: flex;
  flex: none;
  align-items: center;
  justify-content: center;
  width: 15px;
  border-left: 1px solid #cfc8a4;
  background: linear-gradient(#fcfaee, #ece7cb);
  color: #5e4a08;
  font-weight: bold;
}
.link-label {
  padding: 0 2px;
  color: #4468c8;
}
.field-small {
  width: 79px;
  border-left: none;
  border-radius: 0 4px 4px 0;
}
.search-label {
  padding: 0 11px 0 12px;
}
.field-select {
  width: 156px;
}
.field-search {
  flex: 1;
  margin: 0 2px 0 4px;
}
.find-button {
  display: flex;
  align-items: center;
  justify-content: center;
  width: 18px;
  height: 19px;
  padding-left: 2px;
  border: 1px solid #aea67e;
  border-right: none;
  border-radius: 4px 0 0 4px;
  background: linear-gradient(#fcfaee, #ece7cb);
}
.state-label {
  padding: 0 3px 0 11px;
}

/* orders table */
.grid {
  display: flex;
  flex: 1 1 0;
  min-height: 0;
  margin-top: 3px;
  border-top: 1px solid #aea67e;
  background-color: #fbfaf3;
}
.grid-body {
  flex: 1;
  min-width: 0;
  overflow: hidden;
}
.orders {
  width: 100%;
  table-layout: fixed;
  border-collapse: separate;
  border-spacing: 0;
}
.c-icon {
  width: 25px;
}
.c-number {
  width: 75px;
}
.c-date {
  width: 70px;
}
.c-check {
  width: 29px;
}
.c-kind {
  width: 164px;
}
.c-client {
  width: 101px;
}
.c-master {
  width: 155px;
}
.c-short {
  width: 47px;
}
.c-sum {
  width: 86px;
}
.c-currency {
  width: 60px;
}
.c-shop {
  width: 49px;
}
.c-org {
  width: 96px;
}
.orders th {
  height: 21px;
  padding: 0 0 0 4px;
  overflow: hidden;
  border-right: 1px solid #b9b18b;
  border-bottom: 1px solid #b9b18b;
  background: linear-gradient(#fbf9ec, #ece7cb);
  color: #5e4a08;
  font-weight: normal;
  text-align: left;
  white-space: nowrap;
}
.sorted {
  display: flex;
  align-items: center;
  justify-content: space-between;
  padding-right: 6px;
}
.orders td {
  height: 19px;
  padding: 2px 0 0 4px;
  overflow: hidden;
  border-right: 1px solid #c6cfd0;
  border-bottom: 1px solid #c6cfd0;
  color: #101018;
  white-space: nowrap;
}
.orders .check {
  padding-left: 6px;
}
.orders .sum {
  padding-right: 4px;
  text-align: right;
}
.closed {
  background-color: #ffc0cb;
}
.in-work {
  background-color: #ffebcd;
}
.orders .in-work td {
  border-color: #b0c8e4;
}
.starting {
  background-color: #deb887;
}
.done {
  background-color: #b0c4de;
}
.orders .in-work .selected {
  background-color: #6f97cf;
  color: #fff;
}

/* scroll bars */
.scroll-v {
  display: flex;
  flex: none;
  flex-direction: column;
  width: 14px;
}
.scroll-button {
  display: flex;
  flex: none;
  align-items: center;
  justify-content: center;
  background: linear-gradient(#fbf9ec, #ece7cb);
}
.scroll-up {
  height: 21px;
  border-bottom: 1px solid #b9b18b;
}
.scroll-down {
  height: 21px;
  border-top: 1px solid #b9b18b;
}
.scroll-track {
  flex: 1;
  display: flex;
  align-items: center;
}
.thumb-v {
  width: 14px;
  height: 15px;
  border: solid #b9b18b;
  border-width: 1px 0;
  background-color: #ece7cb;
}
.scroll-h {
  display: flex;
  flex: none;
  height: 17px;
  border-top: 1px solid #b9b18b;
  border-bottom: 1px solid #aea67e;
  background-color: #fbfaf3;
}
.scroll-rail {
  flex: 1;
}
.thumb-h {
  display: flex;
  align-items: center;
  height: 15px;
  border-right: 1px solid #b9b18b;
  background: linear-gradient(#f9f7ea, #e4ddbe);
}
.thumb-grid {
  width: 77.2%;
  padding-left: 562px;
}
.thumb-messages {
  width: 52.2%;
  padding-left: 245px;
}
.grip {
  width: 4px;
  height: 4px;
  border-radius: 2px;
  background-color: #c5bfa2;
}
.scroll-right {
  width: 20px;
  border-left: 1px solid #b9b18b;
}
.scroll-corner {
  width: 15px;
  border-left: 1px solid #b9b18b;
}

/* search group */
.selection {
  display: flex;
  flex: none;
  flex-direction: column;
  gap: 5px;
  height: 65px;
  border-bottom: 1px solid #aea67e;
  background-color: #fcfaeb;
}
.group-title {
  display: flex;
  align-items: center;
  gap: 3px;
  height: 12px;
  margin-top: 3px;
  margin-bottom: -3px;
  overflow: hidden;
  color: #b06a00;
  font-family: "DejaVu Sans", sans-serif;
  font-weight: bold;
}
.group-title span {
  display: flex;
  justify-content: flex-end;
  width: 9px;
}
.group-title::after {
  content: "";
  flex: 1;
  height: 1px;
  background-color: #aea67e;
}
.bottom-bar {
  display: flex;
  flex: none;
  justify-content: flex-end;
  height: 26px;
  padding-top: 5px;
  border-bottom: 1px solid #fff;
}
.bottom-button {
  display: flex;
  align-items: center;
  gap: 8px;
  width: 86px;
  height: 14px;
  padding-left: 6px;
  border-left: 1px solid #c5bd98;
}
.bottom-button:first-child {
  border-left: none;
}
.bottom-button + .bottom-button {
  width: 68px;
}

/* messages */
.messages-title {
  flex: none;
  height: 18px;
  margin-top: 4px;
  background-color: #b2b2b2;
}
.messages {
  flex: none;
  height: 102px;
  padding-top: 1px;
  overflow: hidden;
  background-color: #fff;
}
.messages p {
  display: flex;
  justify-content: flex-end;
  width: 235px;
  margin: 0 0 16px;
  color: #000;
  font-family: "Liberation Mono", monospace;
  font-size: 13px;
  line-height: 16px;
}

/* open windows */
.window-tabs {
  display: flex;
  flex: none;
  gap: 1px;
  height: 20px;
  padding-left: 2px;
  overflow: hidden;
}
.tab {
  display: flex;
  flex: none;
  align-items: center;
  width: 11%;
  gap: 1px;
  padding-left: 1px;
  border: 1px solid #b9ab7c;
  background-color: #b2b2b2;
  color: #222;
}
.tab-current {
  border-color: #7ea4dc;
  border-radius: 3px;
  background: linear-gradient(#f2f8ff, #c4dcf8);
  color: #2f4f9c;
}
.status-bar {
  flex: none;
  height: 19px;
  margin: 2px 0 1px;
  border-top: 1px solid #d9d4b8;
  border-bottom: 1px solid #d9d4b8;
}

/* system taskbar */
.taskbar {
  display: flex;
  flex: none;
  gap: 1px;
  height: 40px;
  background: linear-gradient(90deg, #2a2e20, #282a20 26%, #232122 33%);
  color: #fff;
}
.task-search {
  display: flex;
  align-items: center;
  justify-content: flex-end;
  width: 47px;
  padding-right: 5px;
  overflow: hidden;
  border: 1px solid #c8c8c8;
  border-left: none;
  background-color: #f2f2f2;
  color: #444;
  font-family: "Open Sans", sans-serif;
  font-size: 15px;
}
.task {
  display: flex;
  align-items: center;
  justify-content: center;
  width: 48px;
  position: relative;
}
.running::after {
  content: "";
  position: absolute;
  bottom: 0;
  left: 4px;
  right: 4px;
  height: 2px;
  background-color: #76b9ed;
}
.active {
  background-color: #51554a;
}
.active::after {
  left: 0;
  right: 0;
}
.tray {
  display: flex;
  align-items: center;
  gap: 9px;
  margin-left: auto;
  padding-right: 10px;
  font-family: "Open Sans", sans-serif;
  font-size: 12px;
}
.clock {
  display: flex;
  flex-direction: column;
  align-items: center;
  gap: 2px;
  margin: 0 4px;
  line-height: 16px;
}
.notify {
  display: flex;
  width: 22px;
  height: 22px;
  position: relative;
}
.badge {
  position: absolute;
  right: -1px;
  bottom: -5px;
  width: 16px;
  height: 16px;
  border: 1px solid #999;
  border-radius: 8px;
  background-color: #333;
  font-size: 11px;
  line-height: 14px;
  text-align: center;
}

/* window menu */
.menu {
  position: absolute;
  right: 0;
  bottom: 40px;
  width: 276px;
  padding: 1px 1px 0;
  border: 1px solid #858585;
  border-right: none;
  background: linear-gradient(90deg, #fcfaeb 1px, #ece6cc 1px, #ece6cc 25px, #fcfaeb 25px);
}
.menu-item {
  display: flex;
  align-items: center;
  width: 100%;
  height: 23px;
  color: #2e2400;
}
.menu-item:disabled {
  color: #a8966a;
}
.menu-icon {
  display: flex;
  justify-content: center;
  width: 24px;
  margin-right: 8px;
}
.menu-item kbd {
  margin-left: auto;
  padding-right: 8px;
  font: inherit;
  color: #bf9016;
}
.menu-line {
  height: 1px;
  margin: 1px 0 2px 28px;
  background-color: #cfccba;
}
.menu-default {
  font-weight: bold;
}

/* instructions over the screen */
.hint {
  display: flex;
  position: absolute;
  color: #f00;
  font-family: "Open Sans", sans-serif;
  font-size: 14px;
  line-height: 18px;
  white-space: nowrap;
}
.hint-first {
  right: 304px;
  bottom: 126px;
  gap: 6px;
}
.hint-second {
  right: 50px;
  bottom: 165px;
  gap: 14px;
}
.hint-arrow {
  position: absolute;
  right: 311px;
  bottom: 92px;
}
```
